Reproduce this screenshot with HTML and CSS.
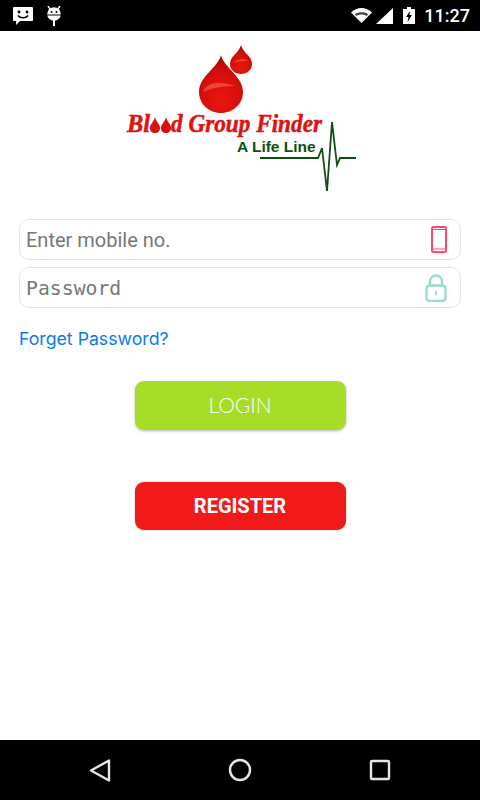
FILE: index.html
```html
<!DOCTYPE html>
<html lang="en">
<head>
    <meta charset="UTF-8">
    <meta name="viewport" content="width=device-width, initial-scale=1.0">
    <title>Blood Group Finder</title>
    <link rel="stylesheet" href="styles.css">
</head>
<body>
    <header class="status-bar">
        <div class="status-left">
            <svg width="20" height="19" viewBox="0 0 20 19">
                <path d="M1 1h18a1 1 0 0 1 1 1v12a1 1 0 0 1-1 1H7l-4 4v-4H1a1 1 0 0 1-1-1V2a1 1 0 0 1 1-1z" fill="#fff"/>
                <circle cx="6" cy="6" r="1.4" fill="#000"/>
                <circle cx="14" cy="6" r="1.4" fill="#000"/>
                <path d="M5 9.5c2 3 8 3 10 0" fill="none" stroke="#000" stroke-width="1.4"/>
            </svg>
            <svg width="16" height="20" viewBox="0 0 16 20">
                <path d="M2 0l2.500 3.500M14 0l-2.500 3.500" stroke="#fff" stroke-width="1.400"/>
                <circle cx="8" cy="8" r="6.800" fill="#fff"/>
                <circle cx="5.500" cy="6" r="1" fill="#000"/>
                <circle cx="10.500" cy="6" r="1" fill="#000"/>
                <rect x="1" y="8.500" width="14" height="1" fill="#000"/>
                <rect x="7" y="13" width="2" height="7" fill="#fff"/>
            </svg>
        </div>
        <div class="status-right">
            <svg class="wifi" width="21" height="15" viewBox="0 0 21 15">
                <path d="M0 4.500C6-1.500 15-1.500 21 4.500L10.500 15z" fill="#fff"/>
                <path d="M3.800 6.200c3.800-2.600 9.600-2.600 13.400 0l-1.500 1.700c-3-2-7.400-2-10.400 0z" fill="#444"/>
            </svg>
            <svg class="signal" width="17" height="16" viewBox="0 0 17 16">
                <path d="M17 0v16H0z" fill="#fff"/>
            </svg>
            <svg class="battery" width="12" height="17" viewBox="0 0 12 17">
                <path d="M4 0h4v2h4v15H0V2h4z" fill="#fff"/>
                <path d="M7 4L3 10h2.500L4.500 15 9 8H6.500z" fill="#000"/>
            </svg>
            <span class="clock">11:27</span>
        </div>
    </header>

    <main>
        <svg class="logo" width="240" height="155" viewBox="120 40 240 155">
            <defs>
                <radialGradient id="drop" cx="0.5" cy="0.75" r="0.65">
                    <stop offset="0" stop-color="#ea1610"/>
                    <stop offset="0.65" stop-color="#d80f0c"/>
                    <stop offset="1" stop-color="#b80606"/>
                </radialGradient>
            </defs>
            <path d="M221 55C218 68 199 76 199 92C199 104 209 113 221 113C233 113 243 104 243 92C243 76 224 68 221 55z" fill="url(#drop)"/>
            <path d="M203 92C206 83 217 80 236 86C225 86 213 87 203 92z" fill="#f4695c" opacity="0.6"/>
            <path d="M241 45C239 53 230 56 230 64C230 70 235 74 241 74C247 74 252 70 252 64C252 56 243 53 241 45z" fill="url(#drop)"/>
            <path d="M233 63C236 59 243 58 249 61C243 61 238 61 233 63z" fill="#f4695c" opacity="0.6"/>
            <text class="logo-name" x="127" y="132" textLength="23" lengthAdjust="spacingAndGlyphs">Bl</text>
            <path d="M155 117C154 122 150 124 150 128C150 131 152 133 155 133C158 133 160 131 160 128C160 124 156 122 155 117z" fill="#d9100e"/>
            <path d="M166 117C165 122 161 124 161 128C161 131 163 133 166 133C169 133 171 131 171 128C171 124 167 122 166 117z" fill="#d9100e"/>
            <text class="logo-name" x="171" y="132" textLength="151" lengthAdjust="spacingAndGlyphs">d Group Finder</text>
            <text class="logo-tag" x="237" y="152">A Life Line</text>
            <path d="M260 158H318L322 148L327 191L332 122L337 165L340 158H356" fill="none" stroke="#0d4f12" stroke-width="1.800"/>
        </svg>

        <form class="login-form">
            <div class="field">
                <span class="placeholder">Enter mobile no.</span>
                <svg class="field-icon" width="16" height="27" viewBox="0 0 16 27">
                    <rect x="1" y="1" width="14" height="25" rx="1.500" fill="none" stroke="#fb4a6e" stroke-width="2"/>
                    <path d="M1 3.500h14M1 23h14" stroke="#fb4a6e" stroke-width="1.200"/>
                </svg>
            </div>
            <div class="field">
                <span class="placeholder mono">Password</span>
                <svg class="field-icon" width="22" height="28" viewBox="0 0 22 28">
                    <path d="M5 12V7.500a6 6 0 0 1 12 0V12" fill="none" stroke="#96dfc5" stroke-width="2.400"/>
                    <rect x="1.500" y="11.500" width="19" height="15.500" rx="3" fill="none" stroke="#96dfc5" stroke-width="2.400"/>
                    <rect x="10" y="17" width="2" height="4" fill="#96dfc5"/>
                </svg>
            </div>
            <a class="forgot" href="#">Forget Password?</a>
        </form>

        <div class="actions">
            <button class="btn btn-login" type="button">LOGIN</button>
            <button class="btn btn-register" type="button">REGISTER</button>
        </div>
    </main>

    <footer class="nav-bar">
        <svg width="22" height="25" viewBox="0 0 22 25">
            <path d="M20 2.500V22.500L2 12.500z" fill="none" stroke="#e6e6e6" stroke-width="2.400" stroke-linejoin="round"/>
        </svg>
        <svg width="24" height="24" viewBox="0 0 24 24">
            <circle cx="12" cy="12" r="10" fill="none" stroke="#e6e6e6" stroke-width="2.400"/>
        </svg>
        <svg width="22" height="22" viewBox="0 0 22 22">
            <rect x="2" y="2" width="18" height="18" rx="1" fill="none" stroke="#e6e6e6" stroke-width="2.400"/>
        </svg>
    </footer>
</body>
</html>
```

FILE: styles.css
```css
* {
    margin: 0;
    padding: 0;
    box-sizing: border-box;
}

body {
    font-family: Roboto, sans-serif;
    width: 480px;
    height: 800px;
    display: flex;
    flex-direction: column;
    background-color: #fff;
    overflow: hidden;
}

.status-bar {
    height: 31px;
    background-color: #000;
    display: flex;
    justify-content: space-between;
    align-items: center;
    padding: 0 10px 0 13px;
    color: #fff;
}

.status-left,
.status-right {
    display: flex;
    align-items: center;
}

.status-left {
    gap: 13px;
}

.status-right .signal {
    margin-left: 4px;
}

.status-right .battery {
    margin-left: 10px;
}

.clock {
    margin-left: 9px;
    font-size: 18px;
    font-weight: 500;
}

main {
    flex: 1;
    padding: 9px 19px 0;
    display: flex;
    flex-direction: column;
}

.logo {
    display: block;
    align-self: center;
}

.logo-name {
    font-family: "Liberation Serif", serif;
    font-style: italic;
    font-weight: bold;
    font-size: 26px;
    fill: #e0120f;
    stroke: #e0120f;
    stroke-width: 0.5px;
}

.logo-tag {
    font-family: "Liberation Sans", sans-serif;
    font-weight: bold;
    font-size: 15.500px;
    fill: #0d4f12;
}

.login-form {
    margin-top: 24px;
    display: flex;
    flex-direction: column;
    gap: 7px;
}

.field {
    height: 41px;
    border: 1.5px solid #dfe5ec;
    border-radius: 10px;
    padding: 0 13px 0 6px;
    display: flex;
    justify-content: space-between;
    align-items: center;
}

.placeholder {
    font-size: 20px;
    color: #777;
}

.placeholder.mono {
    font-family: "DejaVu Sans Mono", monospace;
    font-size: 19.800px;
    padding-top: 2px;
}

.forgot {
    display: block;
    margin-top: 13px;
    font-family: Inter, sans-serif;
    font-size: 17.700px;
    line-height: 22px;
    color: #0a7bf2;
    text-decoration: none;
}

.actions {
    margin-top: 31px;
    display: flex;
    flex-direction: column;
    align-items: center;
    gap: 52px;
}

.btn {
    width: 211px;
    border: none;
    border-radius: 9px;
    color: #fff;
}

.btn-login {
    height: 49px;
    background-color: #a6dd27;
    box-shadow: 0 1px 3px rgba(0, 0, 0, 0.3);
    font-family: Lato, sans-serif;
    font-weight: 300;
    font-size: 21px;
    padding-bottom: 2px;
}

.btn-register {
    height: 48px;
    background-color: #f01a19;
    box-shadow: 0 0 2px rgba(0, 0, 0, 0.3);
    font-family: Roboto, sans-serif;
    font-weight: 700;
    font-size: 20px;
}

.nav-bar {
    height: 60px;
    background-color: #000;
    display: flex;
    justify-content: space-between;
    align-items: center;
    padding: 0 89px;
}
```
